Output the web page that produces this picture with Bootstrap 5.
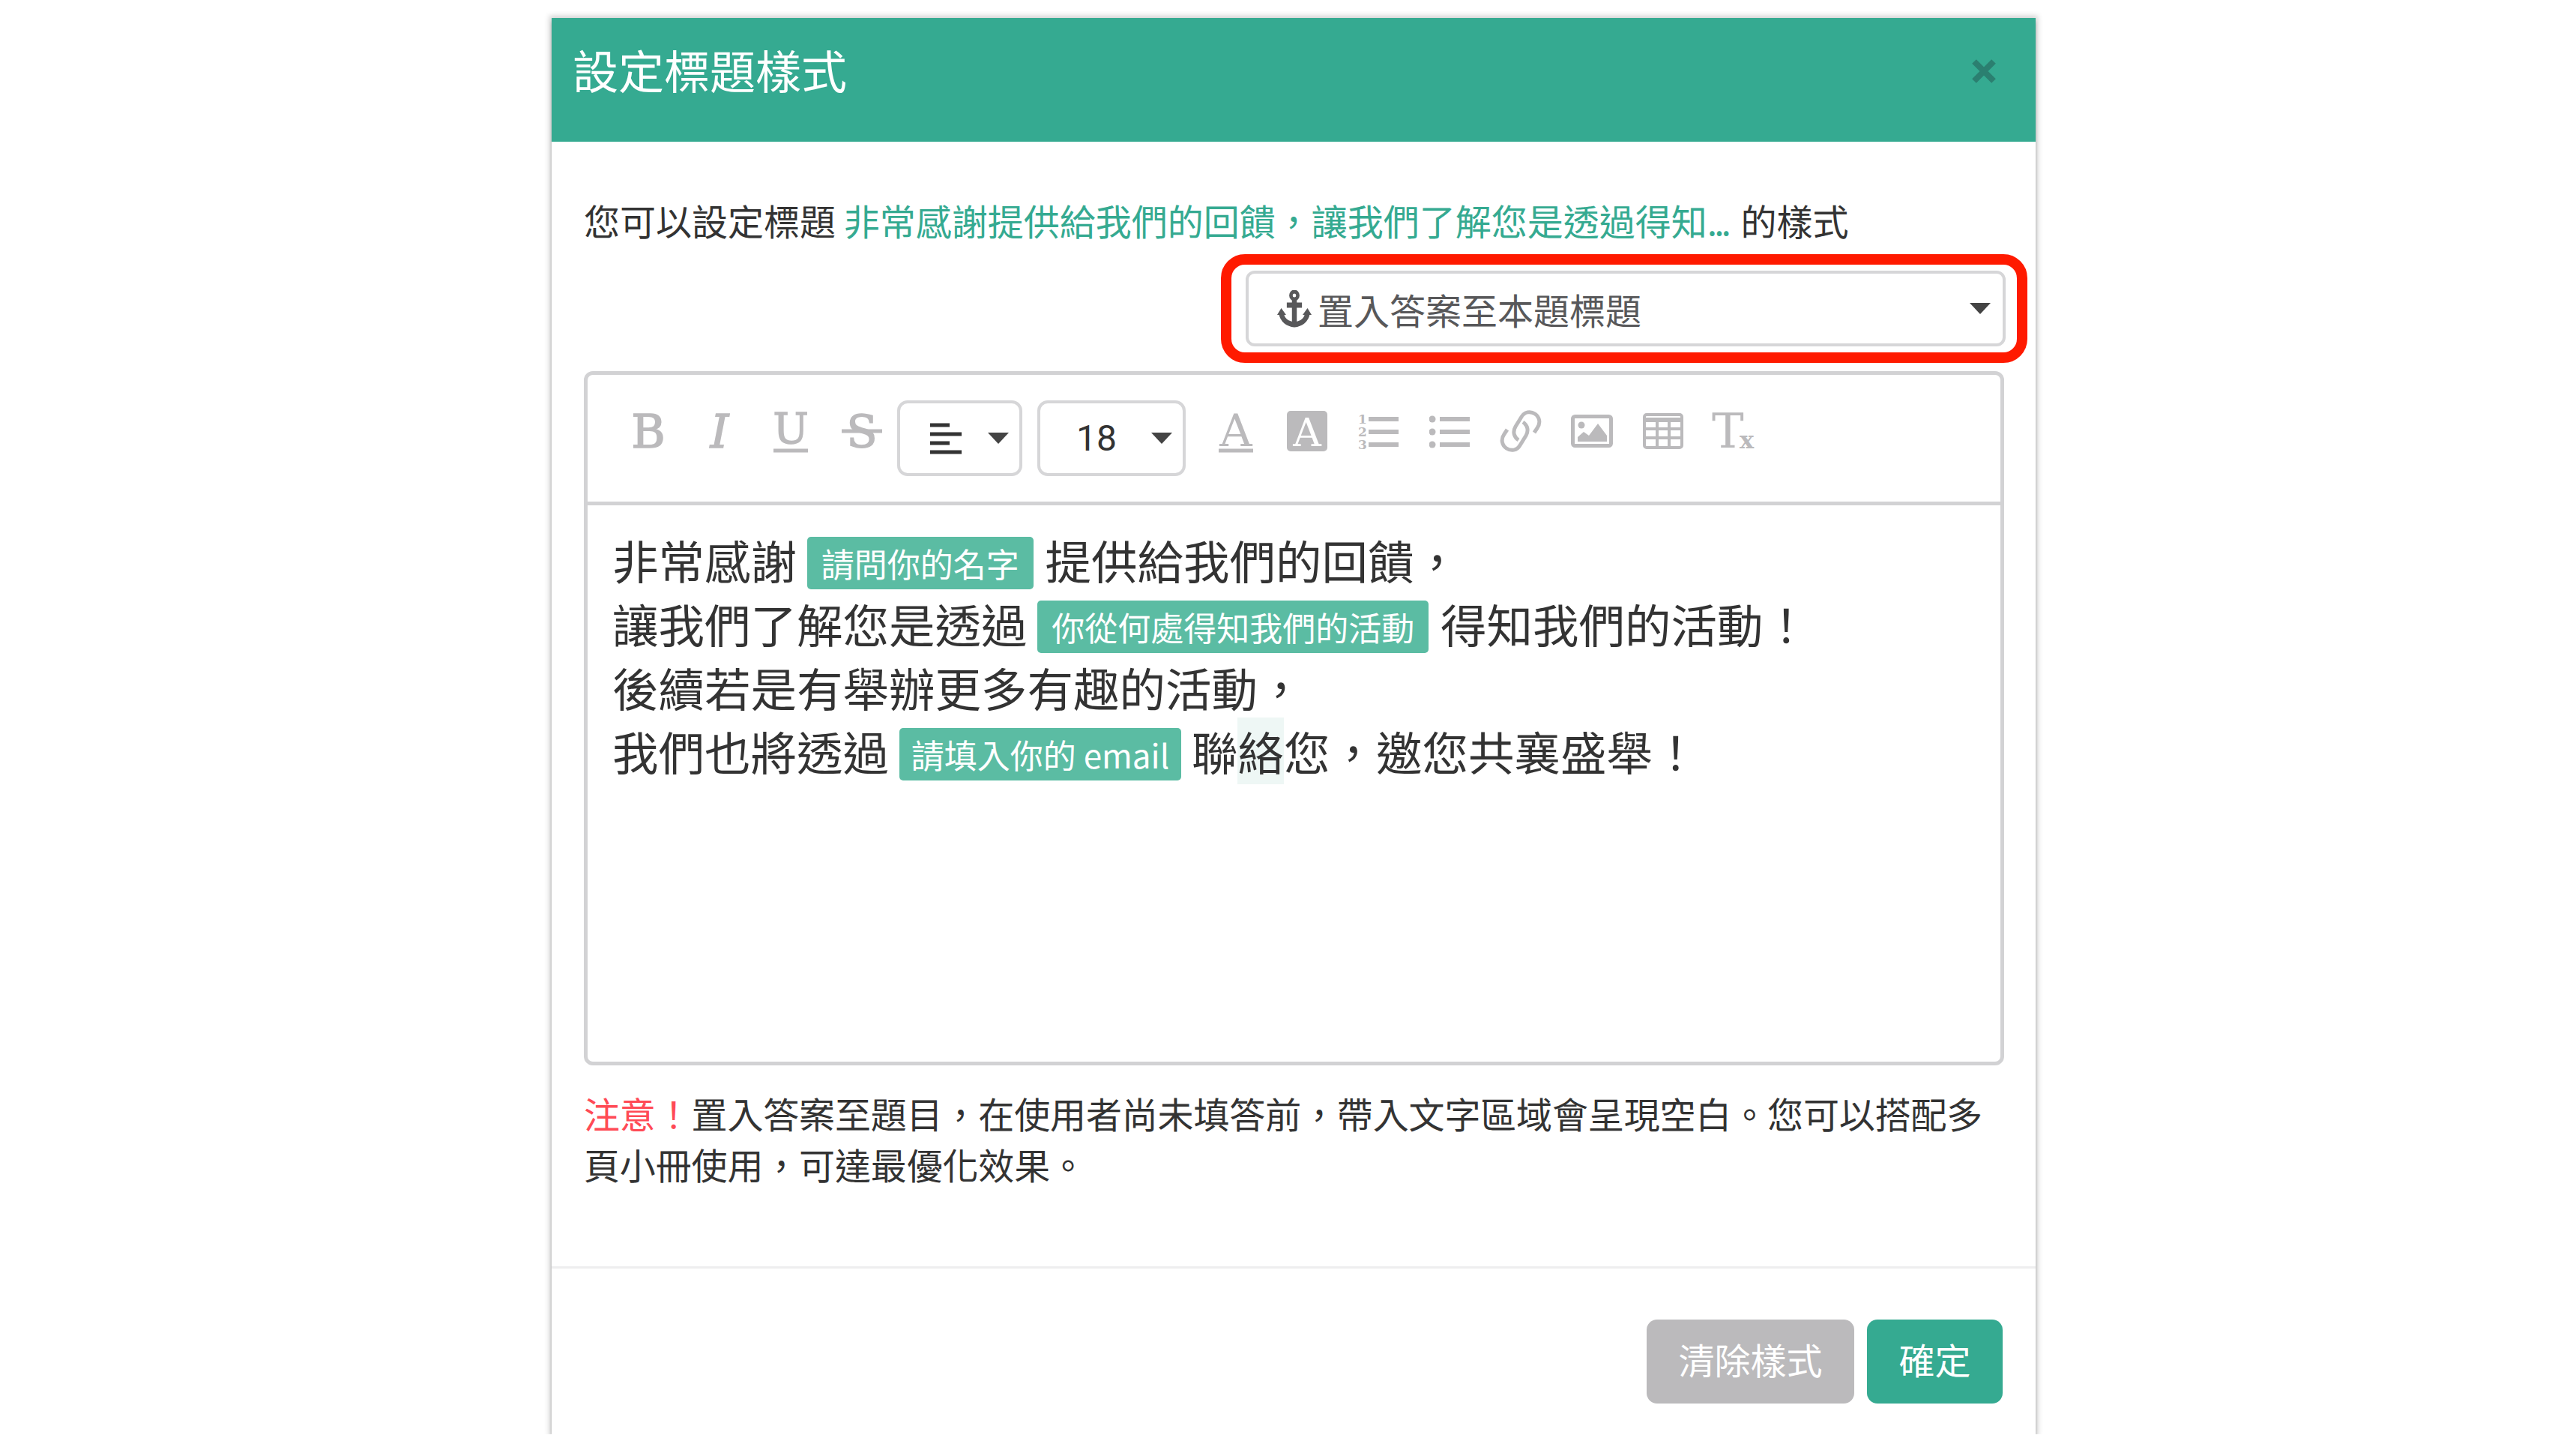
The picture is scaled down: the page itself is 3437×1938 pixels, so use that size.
<!DOCTYPE html>
<html lang="zh-Hant">
<head>
<meta charset="UTF-8">
<title>設定標題樣式</title>
<link href="https://cdn.jsdelivr.net/npm/bootstrap@5.3.0/dist/css/bootstrap.min.css" rel="stylesheet">
<style>
  body { background: #fff; color: #333; font-family: "Noto Sans CJK TC", "Liberation Sans", sans-serif; }
  .page { padding: 24px 0 0 736px; }
  .style-modal { width: 1980px; height: 1889px; border: 0; border-radius: 0; box-shadow: 0 0 7px 3px rgba(0,0,0,.18), 0 6px 4px rgba(0,0,0,.2); }
  .style-modal .modal-header { height: 165px; padding: 33px 51px 0 28px; align-items: flex-start; border: 0; border-radius: 0; background: #35aa91; }
  .style-modal .modal-title { font-size: 61px; line-height: 72px; color: #fff; font-weight: 400; }
  .close-x { width: 36px; height: 36px; margin-top: 20px; background: none; border: 0; padding: 0; display: flex; }
  .style-modal .modal-body { flex: none; padding: 70px 42px 103px 43px; font-size: 48px; line-height: 68px; }
  .accent { color: #35aa91; }
  .dots { letter-spacing: -4px; margin-right: 6px; }
  .warn { color: #ff4a55; display: inline-block; }
  .red-box { width: 1076px; height: 145px; margin: 12px -31px 11px auto; padding: 8px 15px 8px 19px; border: 14px solid #ff1a00; border-radius: 32px; }
  .anchor-select { height: 101px; padding: 0 16px 0 38px; border: 4px solid #d6d6d8; border-radius: 12px; color: #58585a; font-size: 48px; }
  .caret { width: 0; height: 0; border-left: 14px solid transparent; border-right: 14px solid transparent; border-top: 15px solid #444; }
  .editor { height: 926px; border: 5px solid #d2d2d4; border-radius: 12px; }
  .editor-toolbar { height: 174px; padding: 34px 0 0 33px; border-bottom: 5px solid #d2d2d4; }
  .tool { width: 95px; height: 82px; display: flex; align-items: center; justify-content: center; }
  .tool svg { display: block; }
  .tool text { fill: #bbbabc; font-family: "DejaVu Serif", serif; }
  .tool .heavy { stroke: #bbbabc; stroke-width: 1.5px; }
  .tool text.inverse { fill: #fff; }
  .tool-select { height: 101px; border: 4px solid #d6d6d8; border-radius: 14px; padding: 0 14px 0 40px; }
  .tool-select.size { width: 198px; margin: 0 19px 0 20px; padding-left: 48px; color: #333; font-family: Roboto, sans-serif; }
  .tool-select.align { width: 167px; }
  .editor-text { padding: 30px 33px 0; font-size: 61.5px; line-height: 85px; color: #333; }
  .editor-text .badge { background: #5bbca3; border-radius: 5px; font-size: 44px; font-weight: 400; line-height: 70px; padding: 0 19px; vertical-align: 3px; margin: 0 2px 0 0; }
  .editor-text .badge.tight { padding: 0 16px; margin: 0; }
  .cursor-mark { background: #eef7f5; }
  .note { margin-top: 29px; letter-spacing: -.15px; }
  .style-modal .modal-footer { padding: 68px 44px 0 0; border-top: 3px solid #eeeeef; gap: 17px; border-radius: 0; justify-content: flex-end; align-items: flex-start; }
  .style-modal .modal-footer .btn { height: 112px; margin: 0; border: 0; border-radius: 14px; font-size: 48px; color: #fff; padding: 0 0 8px; }
  .btn-clear { width: 277px; background: #bbbabc; }
  .btn-ok { width: 181px; background: #35aa91; }
</style>
</head>
<body>
<div class="page">
  <div class="modal-content style-modal">
    <div class="modal-header d-flex">
      <h5 class="modal-title">設定標題樣式</h5>
      <button type="button" class="close-x ms-auto" aria-label="Close">
        <svg width="36" height="36" viewBox="0 0 36 36"><path d="M5 5L31 31M31 5L5 31" stroke="#2b7f70" stroke-width="8" fill="none"/></svg>
      </button>
    </div>
    <div class="modal-body">
      <div>您可以設定標題 <span class="accent">非常感謝提供給我們的回饋，讓我們了解您是透過得知<span class="dots">...</span></span> 的樣式</div>
      <div class="red-box">
        <div class="anchor-select d-flex align-items-center">
          <svg width="46" height="50" viewBox="0 0 50 50" class="me-2 flex-shrink-0" preserveAspectRatio="none">
            <circle cx="25" cy="7" r="5" fill="none" stroke="#58585a" stroke-width="5"/>
            <path d="M25 12V46M14 20H36" stroke="#58585a" stroke-width="7" fill="none"/>
            <path d="M6 30C7 41 17 45 25 46C33 45 43 41 44 30" stroke="#58585a" stroke-width="7" fill="none"/>
            <path d="M0 33L6 24L13 33ZM37 33L44 24L50 33Z" fill="#58585a"/>
          </svg>
          <span>置入答案至本題標題</span>
          <span class="caret ms-auto"></span>
        </div>
      </div>
      <div class="editor">
        <div class="editor-toolbar d-flex align-items-start">
          <span class="tool"><svg width="60" height="80" viewBox="0 0 60 80"><text class="heavy" x="30" y="62" text-anchor="middle" font-size="62">B</text></svg></span>
          <span class="tool"><svg width="60" height="80" viewBox="0 0 60 80"><text class="heavy" x="30" y="62" text-anchor="middle" font-size="62" font-style="italic">I</text></svg></span>
          <span class="tool"><svg width="60" height="80" viewBox="0 0 60 80"><text class="heavy" x="30" y="56" text-anchor="middle" font-size="56">U</text><path d="M7 66H53" stroke="#bbbabc" stroke-width="5"/></svg></span>
          <span class="tool"><svg width="60" height="80" viewBox="0 0 60 80"><text class="heavy" x="30" y="62" text-anchor="middle" font-size="60">S</text><path d="M3 40H57" stroke="#bbbabc" stroke-width="5"/></svg></span>
          <div class="tool-select align d-flex align-items-center">
            <svg width="42" height="42" viewBox="0 0 42 42"><path d="M0 3H26M0 15H42M0 27H26M0 39H42" stroke="#333" stroke-width="5"/></svg>
            <span class="caret ms-auto"></span>
          </div>
          <div class="tool-select size d-flex align-items-center">
            <span>18</span>
            <span class="caret ms-auto"></span>
          </div>
          <span class="tool"><svg width="60" height="80" viewBox="0 0 60 80"><text x="30" y="60" text-anchor="middle" font-size="60">A</text><path d="M7 66H53" stroke="#bbbabc" stroke-width="5"/></svg></span>
          <span class="tool"><svg width="54" height="68" viewBox="0 0 54 68"><rect y="7" width="54" height="54" rx="5" fill="#bbbabc"/><text class="inverse" x="27" y="54" text-anchor="middle" font-size="52">A</text></svg></span>
          <span class="tool"><svg width="54" height="60" viewBox="0 0 54 60"><text x="0" y="20" font-size="17" font-weight="700">1</text><text x="0" y="37" font-size="17" font-weight="700">2</text><text x="0" y="54" font-size="17" font-weight="700">3</text><path d="M14 14H54M14 31H54M14 48H54" stroke="#bbbabc" stroke-width="6"/></svg></span>
          <span class="tool"><svg width="54" height="50" viewBox="0 0 54 50"><circle cx="4" cy="9" r="4.5" fill="#bbbabc"/><circle cx="4" cy="26" r="4.5" fill="#bbbabc"/><circle cx="4" cy="43" r="4.5" fill="#bbbabc"/><path d="M14 9H54M14 26H54M14 43H54" stroke="#bbbabc" stroke-width="6"/></svg></span>
          <span class="tool"><svg width="56" height="56" viewBox="0 0 56 56" fill="none" stroke="#bbbabc" stroke-width="5"><path d="M46 30L50 24C55 17 53 9 47 5C41 1 33 2 29 9L21 22C17 29 19 36 25 40"/><path d="M10 26L6 32C1 39 3 47 9 51C15 55 23 54 27 47L35 34C39 27 37 20 31 16"/></svg></span>
          <span class="tool"><svg width="56" height="44" viewBox="0 0 56 44"><rect x="2.5" y="2.500" width="51" height="39" rx="3" fill="none" stroke="#bbbabc" stroke-width="5"/><circle cx="14" cy="14" r="4.500" fill="#bbbabc"/><path d="M9 36V30L17 23L24 28L36 12L48 28V36Z" fill="#bbbabc"/></svg></span>
          <span class="tool"><svg width="54" height="48" viewBox="0 0 54 48" fill="none" stroke="#bbbabc" stroke-width="4"><rect x="2" y="2" width="50" height="44" rx="3"/><path d="M2 9H52" stroke-width="6"/><path d="M2 21H52M2 33H52M19 9V46M35 9V46"/></svg></span>
          <span class="tool"><svg width="60" height="80" viewBox="0 0 60 80"><text x="0" y="62" font-size="64">T</text><text x="37" y="63" font-size="32" font-weight="700">x</text></svg></span>
        </div>
        <div class="editor-text">
          <div>非常感謝 <span class="badge">請問你的名字</span> 提供給我們的回饋，</div>
          <div>讓我們了解您是透過 <span class="badge">你從何處得知我們的活動</span> 得知我們的活動！</div>
          <div>後續若是有舉辦更多有趣的活動，</div>
          <div>我們也將透過 <span class="badge tight">請填入你的 email</span> 聯<span class="cursor-mark">絡</span>您，邀您共襄盛舉！</div>
        </div>
      </div>
      <div class="note"><span class="warn">注意！</span>置入答案至題目，在使用者尚未填答前，帶入文字區域會呈現空白。您可以搭配多頁小冊使用，可達最優化效果。</div>
    </div>
    <div class="modal-footer">
      <button type="button" class="btn btn-clear">清除樣式</button>
      <button type="button" class="btn btn-ok">確定</button>
    </div>
  </div>
</div>
<script src="https://cdn.jsdelivr.net/npm/bootstrap@5.3.0/dist/js/bootstrap.bundle.min.js"></script>
</body>
</html>
